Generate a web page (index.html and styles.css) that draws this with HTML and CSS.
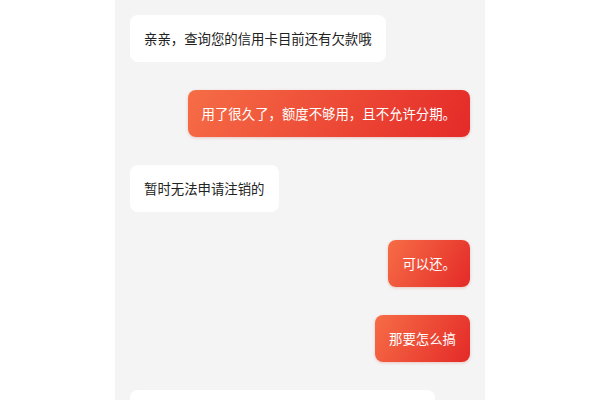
FILE: index.html
```html
<!DOCTYPE html>
<html lang="zh-CN">
<head>
  <meta charset="UTF-8">
  <meta name="viewport" content="width=device-width, initial-scale=1.0">
  <title>客服对话</title>
  <link rel="stylesheet" href="styles.css">
</head>
<body>
  <div class="chat">
    <div class="bubble left">亲亲，查询您的信用卡目前还有欠款哦</div>
    <div class="bubble right">用了很久了，额度不够用，且不允许分期。</div>
    <div class="bubble left">暂时无法申请注销的</div>
    <div class="bubble right">可以还。</div>
    <div class="bubble right">那要怎么搞</div>
    <div class="bubble left wide">&nbsp;</div>
  </div>
</body>
</html>
```

FILE: styles.css
```css
body {
  margin: 0;
  padding: 0;
  background: #fff;
  font-family: "Noto Sans CJK SC", "Noto Sans", sans-serif;
  height: 400px;
  overflow: hidden;
}

.chat {
  width: 370px;
  height: 400px;
  margin: 0 auto;
  box-sizing: border-box;
  padding: 15px 15px 0;
  background: #f4f4f4;
  display: flex;
  flex-direction: column;
  gap: 28px;
  overflow: hidden;
}

.bubble {
  flex-shrink: 0;
  padding: 14px 14px;
  font-size: 13.4px;
  line-height: 19px;
  border-radius: 8px;
  white-space: nowrap;
}

.left {
  align-self: flex-start;
  background: #fff;
  color: #222;
}

.right {
  align-self: flex-end;
  color: #fff;
  background: linear-gradient(120deg, #f66d46, #e42a28);
  box-shadow: 0 1px 3px rgba(200, 60, 40, 0.25);
}

.wide {
  width: 277px;
}
```
